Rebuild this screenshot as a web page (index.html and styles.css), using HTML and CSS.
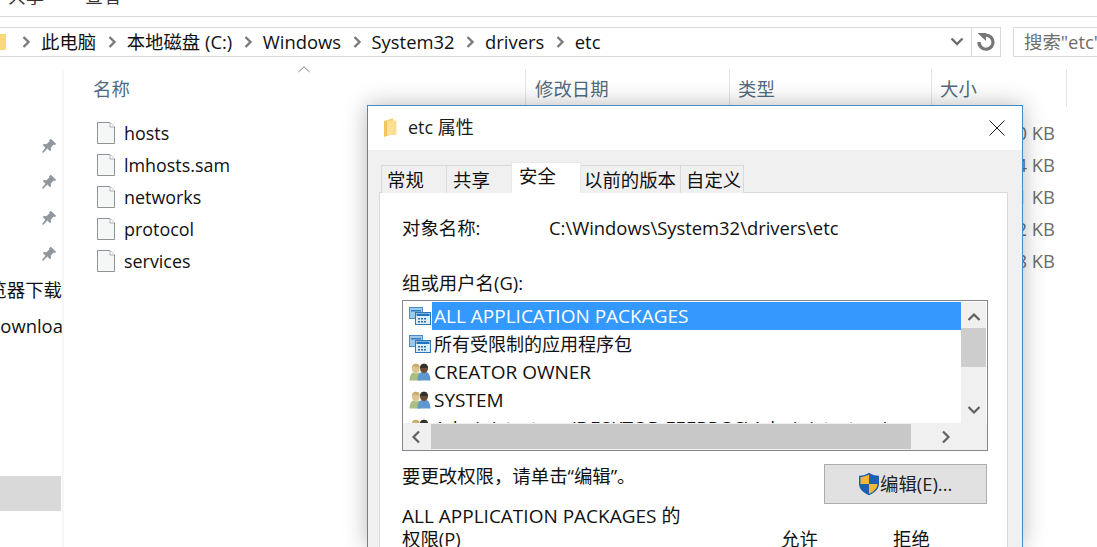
FILE: index.html
```html
<!DOCTYPE html>
<html lang="zh">
<head>
<meta charset="utf-8">
<title>etc 属性</title>
<link rel="stylesheet" href="styles.css">
</head>
<body>
<svg class="defs" width="0" height="0">
  <symbol id="chev" viewBox="0 0 10 14"><path d="M2.500 2l5 5-5 5" fill="none" stroke="currentColor" stroke-width="2.400"/></symbol>
  <symbol id="pin" viewBox="0 0 16 16"><path d="M9.800 0.800l5.400 5.200-1.400 1.100-1-.5-3 3 .2 2.600-1 1-2.600-2.700L2 15l-1-1 3.400-4.300-2.600-2.700 1-1 2.700.2 3-3-.4-1z" fill="#8f969d"/></symbol>
  <symbol id="file" viewBox="0 0 18 22"><path d="M.5.5h12.500l4.500 4.500v16.500h-17z" fill="#f5f6f6" stroke="#8e9397"/><path d="M13 .5v4.500h4.500" fill="#fff" stroke="#a9adb0"/></symbol>
  <symbol id="net" viewBox="0 0 22 18"><rect x=".5" y=".5" width="13" height="11" fill="#9cc8ee" stroke="#4a8fc9"/><rect x="2" y="3" width="10" height="1.500" fill="#2f7fc4"/><rect x="6.500" y="5.500" width="15" height="12" fill="#dcecf9" stroke="#2f78b8"/><rect x="7.500" y="6.500" width="13" height="2.500" fill="#1f74bd"/><path d="M9 11h2v1.500H9zm3 0h2v1.500h-2zm3 0h2v1.500h-2zM9 14h2v1.500H9zm3 0h2v1.500h-2zm3 0h2v1.500h-2z" fill="#2a6da8"/></symbol>
  <symbol id="users" viewBox="0 0 22 18">
    <path d="M.5 17.500c0-4.500 1.500-7 3.500-8l3 1 3-1c1.500 1 2 3 2 8z" fill="#a8bf84"/>
    <path d="M2.800 5.500C2.800 2.500 4.500.8 6.800.8s4 1.700 4 4.700c0 2.700-1.700 4.700-4 4.700s-4-2-4-4.700z" fill="#dcc48e"/>
    <path d="M2.800 5.500C2.800 2.500 4.500.8 6.800.8c2 0 3.500 1.200 3.900 3.200-2.400.5-5-.1-6.200-1-.4.700-.9 1.400-1.700 2.500z" fill="#c9ad6c"/>
    <path d="M8.500 17.500c0-4.500 1.500-7.500 4-8.500l2.500 1 2.500-1c2.500 1 4 4 4 8.500z" fill="#5f97d0"/>
    <path d="M11 5.500C11 2.500 12.700.8 15 .8s4 1.700 4 4.700c0 2.700-1.700 4.700-4 4.700s-4-2-4-4.700z" fill="#6d4d38"/>
    <path d="M11 5c0-2.700 1.700-4.200 4-4.200s4 1.500 4 4.200c-2.700.3-5.300-.2-8 0z" fill="#33302e"/>
  </symbol>
</svg>

<header class="ribbon">
  <span class="ribbon-tab">共享</span>
  <span class="ribbon-tab">查看</span>
</header>

<nav class="address-row">
  <div class="address">
    <span class="crumb-folder"></span>
    <svg class="chev"><use href="#chev"/></svg><span class="crumb">此电脑</span>
    <svg class="chev"><use href="#chev"/></svg><span class="crumb">本地磁盘 (C:)</span>
    <svg class="chev"><use href="#chev"/></svg><span class="crumb">Windows</span>
    <svg class="chev"><use href="#chev"/></svg><span class="crumb">System32</span>
    <svg class="chev"><use href="#chev"/></svg><span class="crumb">drivers</span>
    <svg class="chev"><use href="#chev"/></svg><span class="crumb">etc</span>
    <svg class="drop" viewBox="0 0 14 10"><path d="M1.500 1.500L7 7l5.500-5.500" fill="none" stroke="#6d6d6d" stroke-width="2.400"/></svg>
    <span class="refresh">
      <svg viewBox="0 0 20 20" width="20" height="20"><path d="M6 4.500A7 7 0 1 1 3 10" fill="none" stroke="#767676" stroke-width="3.200"/><path d="M1.500 1h8.500v8z" fill="#767676"/></svg>
    </span>
  </div>
  <div class="search">搜索"etc"</div>
</nav>

<main class="main">
  <aside class="sidebar">
    <svg class="pin"><use href="#pin"/></svg>
    <svg class="pin"><use href="#pin"/></svg>
    <svg class="pin"><use href="#pin"/></svg>
    <svg class="pin"><use href="#pin"/></svg>
    <div class="side-text side-first">浏览器下载</div>
    <div class="side-text side-second">Downloa</div>
    <div class="side-active"></div>
  </aside>
  <section class="files">
    <div class="col-head">
      <span class="col col-name">名称<svg class="sort" viewBox="0 0 12 7"><path d="M.5 6L6 .8 11.500 6" fill="none" stroke="#7d7d7d"/></svg></span>
      <span class="col col-date">修改日期</span>
      <span class="col col-type">类型</span>
      <span class="col col-size">大小</span>
    </div>
    <div class="file-row"><svg class="file"><use href="#file"/></svg><span class="file-name">hosts</span><span class="file-size">10 KB</span></div>
    <div class="file-row"><svg class="file"><use href="#file"/></svg><span class="file-name">lmhosts.sam</span><span class="file-size">4 KB</span></div>
    <div class="file-row"><svg class="file"><use href="#file"/></svg><span class="file-name">networks</span><span class="file-size">1 KB</span></div>
    <div class="file-row"><svg class="file"><use href="#file"/></svg><span class="file-name">protocol</span><span class="file-size">2 KB</span></div>
    <div class="file-row"><svg class="file"><use href="#file"/></svg><span class="file-name">services</span><span class="file-size">18 KB</span></div>
  </section>
</main>

<div class="dialog">
  <div class="dlg-title">
    <svg class="dlg-folder" viewBox="0 0 14 20"><path d="M1 3l9-2.500V16l-9 3z" fill="#f3c65c"/><path d="M4 2.500h9.500V17H4z" fill="#fbdf92"/></svg>
    <span class="dlg-caption">etc 属性</span>
    <svg class="dlg-close" viewBox="0 0 16 16"><path d="M.5.5l15 15M15.500.5l-15 15" stroke="#1a1a1a" fill="none"/></svg>
  </div>
  <div class="dlg-body">
    <div class="tabs">
      <span class="tab t1">常规</span>
      <span class="tab t2">共享</span>
      <span class="tab t3 active">安全</span>
      <span class="tab t4">以前的版本</span>
      <span class="tab t5">自定义</span>
    </div>
    <div class="pane">
      <div class="obj"><span class="obj-label">对象名称:</span><span>C:\Windows\System32\drivers\etc</span></div>
      <div class="group-label">组或用户名(G):</div>
      <div class="listbox">
        <div class="list-main">
          <ul class="rows">
            <li class="row"><svg class="ricon"><use href="#net"/></svg><span class="rtext sel">ALL APPLICATION PACKAGES</span></li>
            <li class="row"><svg class="ricon"><use href="#net"/></svg><span class="rtext cjk">所有受限制的应用程序包</span></li>
            <li class="row"><svg class="ricon"><use href="#users"/></svg><span class="rtext">CREATOR OWNER</span></li>
            <li class="row"><svg class="ricon"><use href="#users"/></svg><span class="rtext">SYSTEM</span></li>
            <li class="row"><svg class="ricon"><use href="#users"/></svg><span class="rtext">Administrators (DESKTOP-FEEPROS\Administrators)</span></li>
          </ul>
          <div class="vscroll">
            <svg class="arrow" viewBox="0 0 14 10"><path d="M1.500 8L7 2.500 12.500 8" fill="none" stroke="#606060" stroke-width="2.200"/></svg>
            <div class="vthumb"></div>
            <svg class="arrow" viewBox="0 0 14 10"><path d="M1.500 2L7 7.500 12.500 2" fill="none" stroke="#606060" stroke-width="2.200"/></svg>
          </div>
        </div>
        <div class="hscroll">
          <svg class="harrow" viewBox="0 0 10 14"><path d="M8 1.500L2.500 7 8 12.500" fill="none" stroke="#606060" stroke-width="2.200"/></svg>
          <div class="hthumb"></div>
          <svg class="harrow" viewBox="0 0 10 14"><path d="M2 1.500L7.500 7 2 12.500" fill="none" stroke="#606060" stroke-width="2.200"/></svg>
        </div>
      </div>
      <div class="edit-row">
        <span class="edit-note">要更改权限，请单击“编辑”。</span>
        <button class="edit-btn" type="button">
          <svg class="shield" viewBox="0 0 22 24">
            <path d="M11 .8c3 2 6 2.800 10 3v8c0 5-4 9-10 11.400C5 20.800 1 16.800 1 11.800v-8c4-.2 7-1 10-3z" fill="#1d5fb0"/>
            <path d="M11 2.500v9.500H2.500V5c3.500-.3 6-1.200 8.500-2.500zM11 12h8.500c-.3 4.500-3.800 7.800-8.500 10z" fill="#f5b82e"/>
          </svg>编辑(E)...
        </button>
      </div>
      <div class="perm-head">
        <div class="perm-title">ALL APPLICATION PACKAGES 的</div>
        <div class="perm-cols">
          <span class="perm-sub">权限(P)</span>
          <span class="perm-allow">允许</span>
          <span class="perm-deny">拒绝</span>
        </div>
      </div>
    </div>
  </div>
</div>
</body>
</html>
```

FILE: styles.css
```css
* { box-sizing: border-box; }
html, body { margin: 0; padding: 0; }
html { overflow: hidden; }
body {
  width: 1097px;
  height: 547px;
  overflow: hidden;
  position: relative;
  background: #fff;
  color: #111;
  font: 18.4px/28px "Open Sans", "Noto Sans CJK SC", sans-serif;
}
.defs { position: absolute; }

.ribbon {
  height: 17px;
  border-bottom: 1px solid #dcdcdc;
  overflow: hidden;
  display: flex;
  gap: 41px;
  padding-left: 8px;
  color: #333;
}
.ribbon-tab { line-height: 24px; height: 24px; margin-top: -16px; font-size: 18px; }

.address-row {
  display: flex;
  margin-top: 10px;
  height: 30px;
}
.address {
  width: 1001px;
  flex: none;
  display: flex;
  align-items: center;
  border: 1px solid #d9d9d9;
  border-left: 0;
  height: 30px;
}
.crumb-folder { width: 6px; height: 16px; background: #f9d87c; flex: none; margin-right: 15px; }
.chev { width: 10px; height: 14px; color: #7b7b7b; flex: none; }
.crumb { margin: 0 10.5px 0 10px; white-space: nowrap; }
.drop { width: 14px; height: 10px; margin-left: auto; margin-right: 7px; }
.refresh {
  width: 29px;
  height: 28px;
  border-left: 1px solid #d9d9d9;
  display: flex;
  align-items: center;
  justify-content: center;
}
.search {
  margin-left: 12px;
  flex: none;
  width: 90px;
  height: 30px;
  padding-left: 10px;
  border: 1px solid #d9d9d9;
  border-right: 0;
  color: #6d6d6d;
  white-space: nowrap;
  overflow: hidden;
}

.main { display: flex; height: 478px; margin-top: 12px; }
.sidebar {
  width: 64px;
  flex: none;
  border-right: 2px solid #f6f7f8;
  overflow: hidden;
  padding-top: 69px;
}
.pin { display: block; width: 16px; height: 16px; margin: 0 0 20px 41px; }
.side-text { height: 36px; line-height: 36px; white-space: nowrap; overflow: hidden; width: 62px; }
.side-first { direction: rtl; margin-top: -10px; }
.side-second { text-indent: -13px; }
.side-active { height: 35px; width: 61px; background: #d9d9d9; margin-top: 132px; }

.files { flex: 1; position: relative; }
.col-head {
  display: flex;
  height: 38px;
  padding-left: 29px;
  color: #4f6a80;
  margin-bottom: 10px;
}
.col { padding-top: 6px; position: relative; white-space: nowrap; }
.col-name { width: 432px; }
.col-date { width: 204px; padding-left: 9px; border-left: 1px solid #e5e5e5; }
.col-type { width: 202px; padding-left: 8px; border-left: 1px solid #e5e5e5; }
.col-size { width: 136px; padding-left: 8px; border-left: 1px solid #e5e5e5; border-right: 1px solid #e5e5e5; }
.sort { position: absolute; left: 205px; top: -3px; width: 12px; height: 7px; }

.file-row { display: flex; align-items: center; height: 32px; padding-left: 33px; font-size: 17.9px; }
.file { width: 18px; height: 22px; flex: none; }
.file-name { margin-left: 9px; }
.file-size { position: absolute; right: 42px; color: #6d6d6d; font-size: 18.4px; }

.dialog {
  position: absolute;
  left: 367px;
  top: 105px;
  width: 656px;
  height: 442px;
  overflow: hidden;
  background: #f0f0f0;
  border: 1px solid #3f8ccb;
  border-bottom: 0;
  box-shadow: 0 0 22px rgba(0, 0, 0, .28);
}
.dlg-title {
  height: 44px;
  background: #fff;
  display: flex;
  align-items: center;
  padding-left: 15px;
}
.dlg-folder { width: 14px; height: 20px; margin-right: 11px; flex: none; }
.dlg-caption { font-size: 18px; color: #1a1a1a; margin-top: -2px; }
.dlg-close { width: 16px; height: 16px; margin-left: auto; margin-right: 17px; }

.dlg-body { padding: 13px 14px 0 11px; }
.tabs { display: flex; align-items: flex-end; height: 30px; margin-bottom: -1px; position: relative; z-index: 1; }
.tab {
  height: 28px;
  line-height: 28px;
  padding-left: 6px;
  background: #f0f0f0;
  border: 1px solid #d9d9d9;
  border-bottom: 0;
  white-space: nowrap;
  margin-left: -1px;
}
.t1 { width: 66px; margin-left: 2px; padding-left: 5px; }
.t2 { width: 66px; }
.t3 { width: 70px; }
.t4 { width: 101px; padding-left: 3px; }
.t5 { width: 64px; padding-left: 5px; }
.tab.active { height: 31px; background: #fff; border-color: #e8e8e8; position: relative; z-index: 2; line-height: 26px; padding-left: 7px; }

.pane {
  height: 355px;
  overflow: hidden;
  background: #fff;
  border: 1px solid #d9d9d9;
  border-bottom: 0;
  padding: 21px 20px 0 22px;
}
.obj { display: flex; height: 28px; white-space: nowrap; }
.obj-label { width: 147px; }
.group-label { margin-top: 27px; height: 28px; }
.listbox {
  margin-top: 3px;
  width: 586px;
  height: 151px;
  border: 1px solid #828790;
  background: #f0f0f0;
  overflow: hidden;
}
.list-main { display: flex; height: 122px; padding-top: 1px; background: #fff; }
.rows { list-style: none; margin: 0; padding: 0; width: 558px; height: 121px; overflow: hidden; font-size: 19px; }
.row { display: flex; height: 28px; align-items: center; padding-left: 6px; white-space: nowrap; }
.ricon { width: 22px; height: 18px; flex: none; margin-right: 1px; }
.rtext { flex: 1; padding-left: 2px; height: 28px; }
.rtext.cjk { font-size: 18px; }
.rtext.sel { background: #3399ff; color: #fff; }
.vscroll { width: 25px; background: #f0f0f0; display: flex; flex-direction: column; align-items: center; }
.arrow { width: 14px; height: 10px; flex: none; margin-top: 10px; }
.vthumb { width: 25px; flex: none; height: 39px; background: #cdcdcd; margin-top: 6px; margin-bottom: 28px; }
.hscroll { display: flex; align-items: center; height: 27px; background: #f0f0f0; padding-right: 2px; }
.harrow { width: 10px; height: 14px; flex: none; margin-left: 8px; }
.hthumb { width: 480px; height: 25px; background: #c8c8c8; margin: 0 22px 0 10px; }

.edit-row {
  display: flex;
  justify-content: space-between;
  width: 585px;
  margin-top: 13px;
  height: 40px;
}
.edit-note { line-height: 24px; }
.edit-btn {
  width: 163px;
  height: 40px;
  background: #e1e1e1;
  border: 1px solid #adadad;
  font: inherit;
  color: #222;
  display: flex;
  align-items: center;
  padding: 0 0 0 33px;
}
.shield { width: 22px; height: 24px; flex: none; }

.perm-head { line-height: 24px; }
.perm-title { white-space: nowrap; height: 23px; font-size: 19px; }
.perm-cols { display: flex; height: 24px; }
.perm-sub { width: 379px; flex: none; }
.perm-allow { width: 112px; flex: none; }
.perm-deny { flex: none; }
```
